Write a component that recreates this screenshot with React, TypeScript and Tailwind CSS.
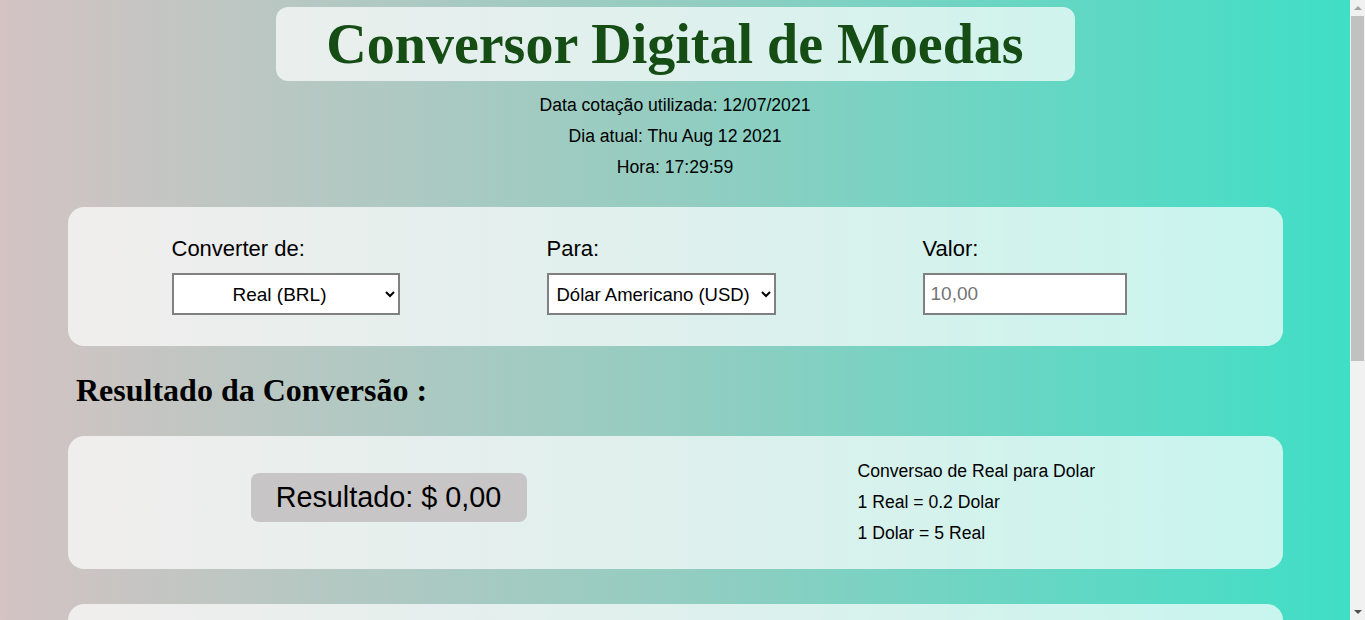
import { useState } from "react";

const serif = "font-['Liberation_Serif','Times_New_Roman',serif]";
const field = "mt-[9px] h-[42px] bg-white border-2 border-[#808080]";

function FakeScrollbar() {
  return (
    <div className="fixed top-0 right-0 h-screen w-[15px] bg-[#f1f1f1] flex flex-col items-center">
      <div className="h-[16px] flex items-center justify-center">
        <div className="w-0 h-0 border-x-[4px] border-x-transparent border-b-[4px] border-b-[#a3a3a3]" />
      </div>
      <div className="w-[13px] h-[345px] bg-[#c1c1c1]" />
      <div className="flex-1" />
      <div className="h-[16px] flex items-center justify-center">
        <div className="w-0 h-0 border-x-[4px] border-x-transparent border-t-[4px] border-t-[#505050]" />
      </div>
    </div>
  );
}

export default function App() {
  const [from, setFrom] = useState("BRL");
  const [to, setTo] = useState("USD");
  const [valor, setValor] = useState("");

  return (
    <div className="min-h-[900px] bg-[linear-gradient(90deg,#d3c3c3_0%,#93cdc1_50%,#3ddfc6_100%)] font-['Liberation_Sans',Arial,sans-serif] text-black">
      <div className="w-[1350px] pt-[7px] pb-10">
        {/* Header */}
        <div className="mx-auto w-[799px] h-[74px] rounded-xl bg-white/70 flex items-center justify-center">
          <h1 className={`${serif} text-[56px] font-bold leading-none text-[#154d15]`}>
            Conversor Digital de Moedas
          </h1>
        </div>
        <div className="mt-[9px] flex flex-col items-center text-[17.6px] leading-[31px]">
          <p>Data cotação utilizada: 12/07/2021</p>
          <p>Dia atual: Thu Aug 12 2021</p>
          <p>Hora: 17:29:59</p>
        </div>

        {/* Form card */}
        <section className="mx-auto mt-[24px] w-[1215px] h-[139px] rounded-2xl bg-white/70 pl-[104px] pt-[27px] grid grid-cols-[375px_376px_auto]">
          <label className="flex flex-col">
            <span className="text-[22px] leading-[30px]">Converter de:</span>
            <select
              value={from}
              onChange={(e) => setFrom(e.target.value)}
              className={`${field} w-[228px] px-1 text-[19px] [text-align-last:center]`}
            >
              <option value="BRL">Real (BRL)</option>
              <option value="USD">Dólar Americano (USD)</option>
            </select>
          </label>
          <label className="flex flex-col">
            <span className="text-[22px] leading-[30px]">Para:</span>
            <select
              value={to}
              onChange={(e) => setTo(e.target.value)}
              className={`${field} w-[229px] pl-[4px] pr-0 text-[18.5px]`}
            >
              <option value="USD">Dólar Americano (USD)</option>
              <option value="BRL">Real (BRL)</option>
            </select>
          </label>
          <label className="flex flex-col">
            <span className="text-[22px] leading-[30px]">Valor:</span>
            <input
              value={valor}
              onChange={(e) => setValor(e.target.value)}
              placeholder="10,00"
              className={`${field} w-[204px] text-[19px] px-[6px] placeholder:text-[#757575] outline-none`}
            />
          </label>
        </section>

        <h2 className={`${serif} ml-[76px] mt-[26px] text-[32px] font-bold leading-[36px]`}>
          Resultado da Conversão :
        </h2>

        {/* Result card */}
        <section className="mx-auto mt-[28px] w-[1215px] h-[133px] rounded-2xl bg-white/70 flex items-center">
          <div className="ml-[183px] mb-[10px] w-[276px] h-[49px] rounded-lg bg-[#c8c5c6] flex items-center justify-center text-[28.8px]">
            Resultado: $ 0,00
          </div>
          <div className="ml-[331px] text-[17.6px] leading-[31px]">
            <p>Conversao de Real para Dolar</p>
            <p>1 Real = 0.2 Dolar</p>
            <p>1 Dolar = 5 Real</p>
          </div>
        </section>

        {/* Next card */}
        <section className="mx-auto mt-[35px] w-[1215px] h-[133px] rounded-2xl bg-white/70" />
      </div>
      <FakeScrollbar />
    </div>
  );
}
